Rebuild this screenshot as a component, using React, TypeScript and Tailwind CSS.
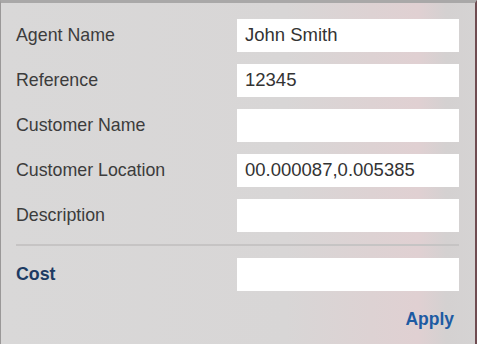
import React from "react";

const rows: { label: string; value: string }[] = [
  { label: "Agent Name", value: "John Smith" },
  { label: "Reference", value: "12345" },
  { label: "Customer Name", value: "" },
  { label: "Customer Location", value: "00.000087,0.005385" },
  { label: "Description", value: "" },
];

export default function App() {
  return (
    <div
      className="w-[477px] h-[344px] box-border border-t-[3px] border-t-[#a9a8a8] border-l border-l-[#9a9898] border-r-2 border-r-[#6f4c51] bg-[linear-gradient(90deg,#d9d8d8_0%,#d8d6d6_60%,#ddd2d3_78%,#e0d0d2_88%,#d4d1d1_94%,#d5d3d3_100%)] pl-[15px] pr-4 pt-4 flex flex-col"
      style={{ fontFamily: '"Liberation Sans", Arial, sans-serif' }}
    >
      <div className="flex flex-col gap-3">
        {rows.map((r) => (
          <div key={r.label} className="flex items-center h-[33px]">
            <div className="flex-1 text-[17.8px] text-[#3c3c3c] leading-none">{r.label}</div>
            <div className="w-[222px] h-[33px] bg-white flex items-center pl-2 text-[18.5px] text-[#333] leading-none">
              {r.value}
            </div>
          </div>
        ))}
      </div>
      <div className="h-[2px] bg-[#c6c4c4] my-3" />
      <div className="flex items-center h-[33px]">
        <div className="flex-1 text-[17.8px] font-bold text-[#1d3b63] leading-none">Cost</div>
        <div className="w-[222px] h-[33px] bg-white" />
      </div>
      <div className="flex justify-end mt-[20px] pr-[5px]">
        <span className="text-[17.5px] font-bold text-[#1d5ba3] leading-none">Apply</span>
      </div>
    </div>
  );
}
